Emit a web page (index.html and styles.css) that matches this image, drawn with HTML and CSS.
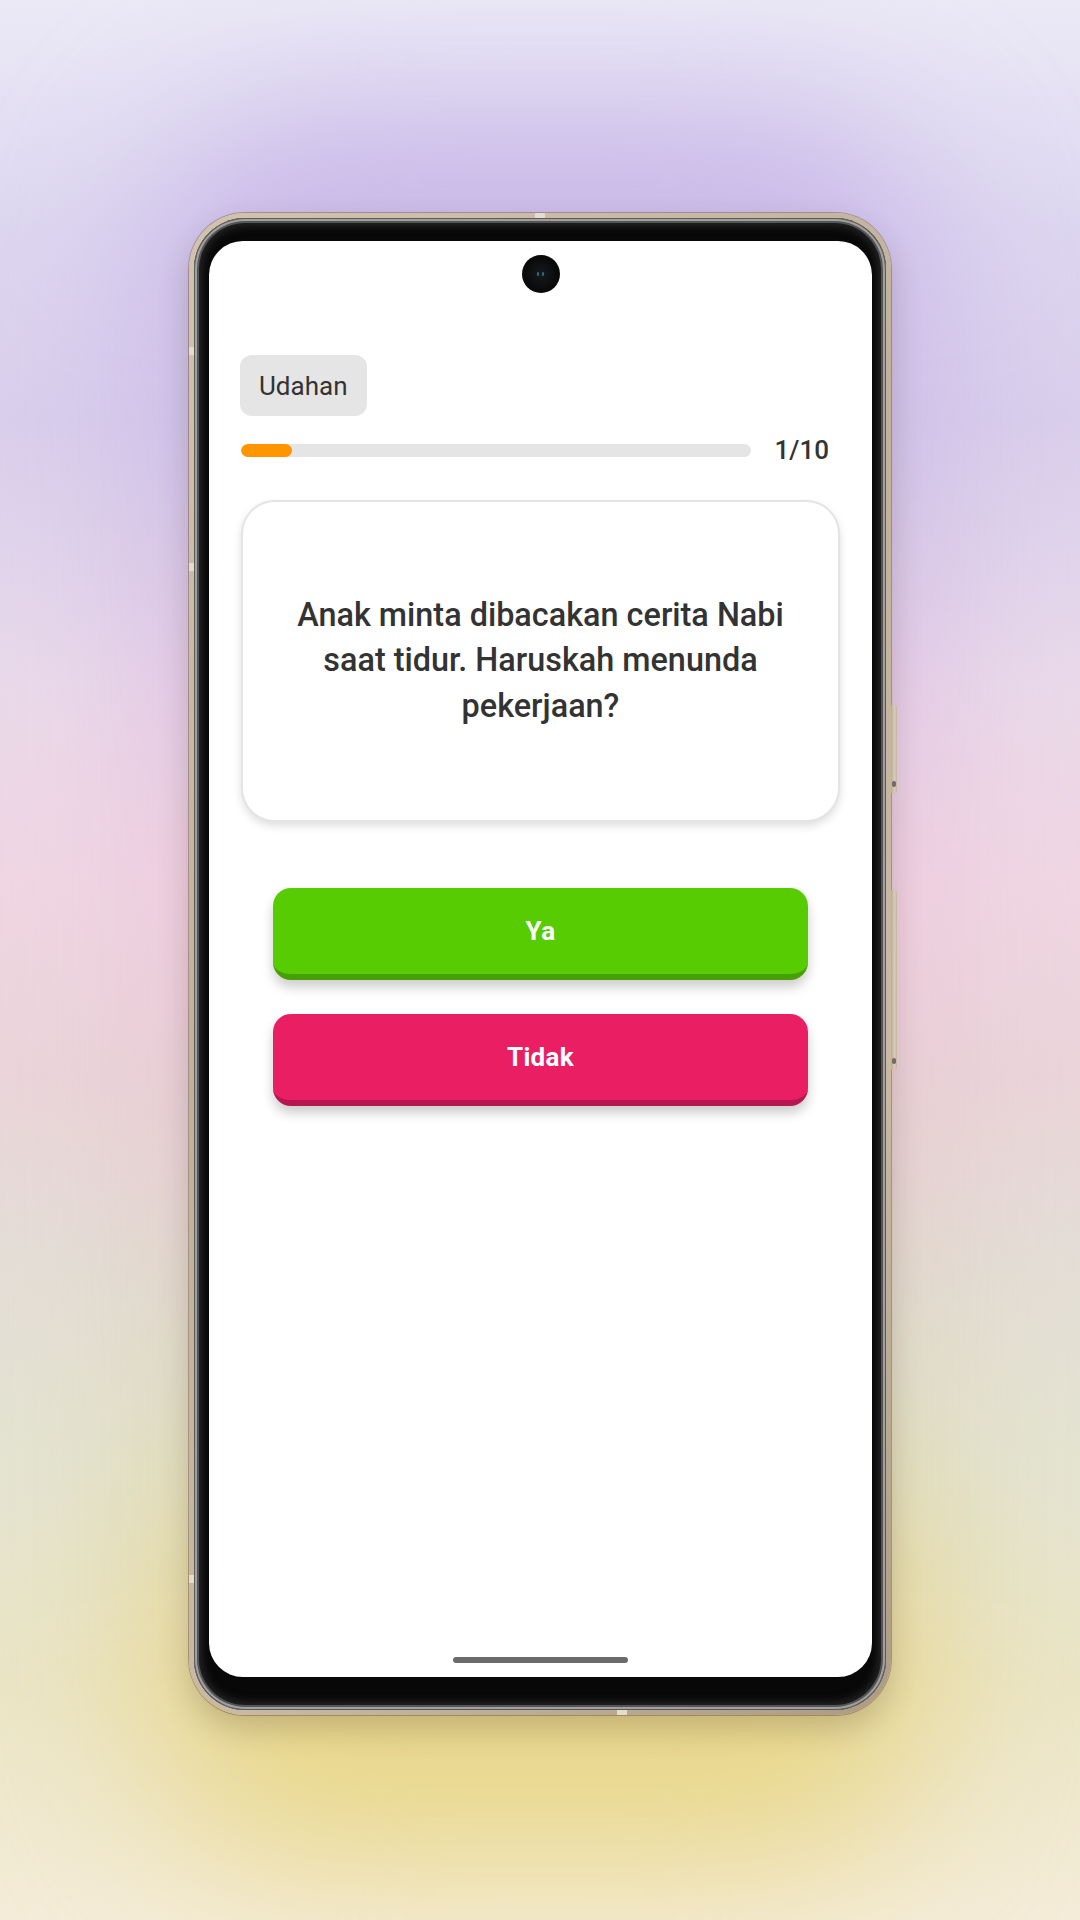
FILE: index.html
```html
<!DOCTYPE html>
<html lang="id">
<head>
<meta charset="utf-8">
<title>Kuis</title>
<link rel="stylesheet" href="styles.css">
</head>
<body>
<div class="stage">
  <div class="phone">
    <span class="side-btn power"></span>
    <span class="side-btn volume"></span>
    <span class="rim-mark rim-top"></span>
    <span class="rim-mark rim-bottom"></span>
    <span class="rim-mark rim-left l1"></span>
    <span class="rim-mark rim-left l2"></span>
    <span class="rim-mark rim-left l3"></span>
    <div class="bezel">
      <div class="screen">
        <div class="camera"><i></i><i></i></div>
        <main class="quiz">
          <button class="quit">Udahan</button>
          <div class="progress-row">
            <div class="track"><div class="fill" style="width:10%"></div></div>
            <span class="count">1/10</span>
          </div>
          <div class="question-card">
            <p>Anak minta dibacakan cerita Nabi saat tidur. Haruskah menunda pekerjaan?</p>
          </div>
          <div class="answers">
            <button class="answer yes">Ya</button>
            <button class="answer no">Tidak</button>
          </div>
        </main>
        <div class="home-indicator"></div>
      </div>
    </div>
  </div>
</div>
</body>
</html>
```

FILE: styles.css
```css
html, body {
  margin: 0;
  width: 1080px;
  height: 1920px;
  overflow: hidden;
}

body {
  font-family: Roboto, "Noto Sans", "Liberation Sans", sans-serif;
  background: linear-gradient(180deg,
    #ebe9f6 0%,
    #ddd6f0 12%,
    #d9cfec 22%,
    #eadaea 36%,
    #f0d6e2 46%,
    #ead5da 56%,
    #e4ded6 66%,
    #e4e4d2 76%,
    #ebe5c6 88%,
    #f4ecd8 100%);
}

.stage {
  position: relative;
  height: 1920px;
  box-sizing: border-box;
  padding-top: 213px;
  display: flex;
  justify-content: center;
  align-items: flex-start;
}

.stage::before {
  content: "";
  position: absolute;
  left: 150px;
  right: 150px;
  top: 120px;
  bottom: 60px;
  border-radius: 160px;
  background: linear-gradient(180deg,
    #c7b6e8 0%,
    #cbbbe6 20%,
    #eec9e0 42%,
    #e8c8d2 55%,
    #dcd9c4 72%,
    #e6d58a 88%,
    #ecd98a 100%);
  filter: blur(80px);
}

.phone {
  position: relative;
  width: 702px;
  height: 1502px;
  box-sizing: border-box;
  padding: 5px;
  border-radius: 56px;
  background: linear-gradient(135deg, #d3c3ad 0%, #c2b199 40%, #cab9a3 70%, #ad9b83 100%);
  box-shadow: 0 14px 30px rgba(70, 50, 30, 0.22), 0 0 0 1px rgba(110, 92, 72, 0.45);
}

.bezel {
  height: 100%;
  box-sizing: border-box;
  border-radius: 51px;
  background: #080808;
  padding: 23px 14px 33px 15px;
  box-shadow:
    inset 0 0 0 1px #5a5a5a,
    inset 0 0 0 3px #a0a0a0,
    inset 0 0 0 5px #555555,
    inset 0 0 8px 8px #262626;
}

.screen {
  position: relative;
  height: 100%;
  box-sizing: border-box;
  background: #ffffff;
  border-radius: 34px;
  display: flex;
  flex-direction: column;
  overflow: hidden;
}

.camera {
  position: absolute;
  left: 50%;
  top: 14px;
  width: 38px;
  height: 38px;
  margin-left: -19px;
  border-radius: 50%;
  background: radial-gradient(circle at 50% 50%, #161a1e 0%, #0a0a0a 60%, #050505 100%);
  display: flex;
  justify-content: center;
  align-items: center;
  gap: 3px;
}

.camera i {
  width: 2px;
  height: 4px;
  border-radius: 1px;
  background: #2f6b72;
}

.quiz {
  display: flex;
  flex-direction: column;
  padding: 114px 32px 0 32px;
}

.quit {
  align-self: flex-start;
  height: 61px;
  margin-left: -1px;
  padding: 0 19px;
  border: none;
  border-radius: 12px;
  background: #e5e5e5;
  color: #333333;
  font-family: inherit;
  font-size: 26px;
  font-weight: 400;
}

.progress-row {
  margin-top: 19px;
  height: 30px;
  display: flex;
  align-items: center;
  gap: 24px;
  padding-right: 11px;
}

.track {
  flex: 1;
  height: 13px;
  border-radius: 7px;
  background: #e5e5e5;
  overflow: hidden;
}

.fill {
  height: 100%;
  border-radius: 7px;
  background: #ff9600;
}

.count {
  font-size: 26px;
  font-weight: 500;
  color: #333333;
  line-height: 30px;
}

.question-card {
  margin-top: 35px;
  height: 322px;
  box-sizing: border-box;
  padding: 0 40px;
  border: 2px solid #e4e4e4;
  border-radius: 34px;
  background: #ffffff;
  box-shadow: 0 4px 9px rgba(0, 0, 0, 0.13);
  display: flex;
  align-items: center;
  justify-content: center;
}

.question-card p {
  margin: 0;
  text-align: center;
  font-size: 32.4px;
  font-weight: 500;
  line-height: 45.5px;
  color: #333333;
}

.answers {
  margin-top: 66px;
  padding: 0 32px;
  display: flex;
  flex-direction: column;
  gap: 34px;
}

.answer {
  height: 92px;
  border: none;
  border-radius: 18px;
  color: #ffffff;
  font-family: inherit;
  font-size: 26px;
  font-weight: 700;
  letter-spacing: 0.3px;
  box-shadow: 0 7px 12px rgba(0, 0, 0, 0.2);
}

.answer.yes {
  background: #58cc02;
  border-bottom: 6px solid #479e05;
}

.answer.no {
  background: #e91e63;
  border-bottom: 6px solid #b5174f;
}

.home-indicator {
  margin-top: auto;
  margin-bottom: 14px;
  align-self: center;
  width: 175px;
  height: 6px;
  border-radius: 3px;
  background: #6b6b6b;
}

.side-btn {
  position: absolute;
  right: -6px;
  width: 6px;
  border-radius: 0 3px 3px 0;
  background: linear-gradient(90deg, #bcab95, #d8cbb9 60%, #c4b49e);
}

.side-btn::after {
  content: "";
  position: absolute;
  left: 1px;
  bottom: 6px;
  width: 4px;
  height: 6px;
  border-radius: 2px;
  background: #6e6a66;
}

.side-btn.power {
  top: 492px;
  height: 88px;
}

.side-btn.volume {
  top: 677px;
  height: 180px;
}

.rim-mark {
  position: absolute;
  background: #e6dccd;
}

.rim-top {
  top: 0;
  left: 346px;
  width: 10px;
  height: 5px;
}

.rim-bottom {
  bottom: 0;
  left: 428px;
  width: 10px;
  height: 5px;
}

.rim-left {
  left: 0;
  width: 5px;
  height: 8px;
}

.rim-left.l1 { top: 134px; }
.rim-left.l2 { top: 350px; }
.rim-left.l3 { top: 1362px; }
```
